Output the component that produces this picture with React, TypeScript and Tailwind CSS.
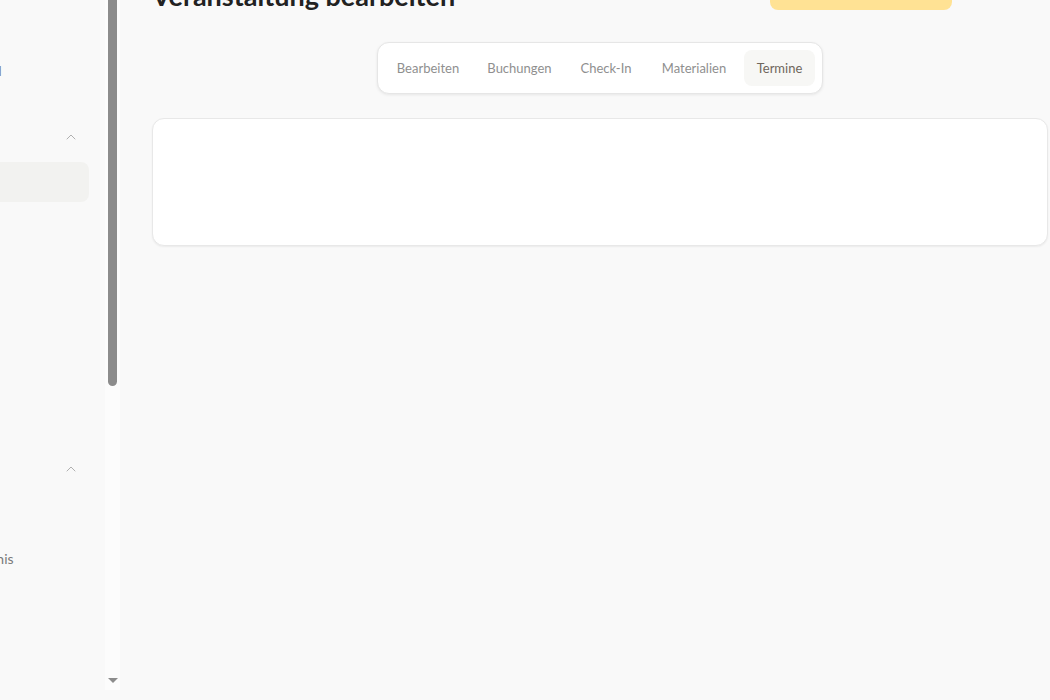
import { ChevronUp, LayoutDashboard, CalendarDays, Users, BookOpen, FileText, Settings, MapPin, Folder, Save } from "lucide-react";

const tabs = [
  { label: "Bearbeiten", w: "w-[86px]" },
  { label: "Buchungen", w: "w-[87px]" },
  { label: "Check-In", w: "w-[76px]" },
  { label: "Materialien", w: "w-[90px]" },
  { label: "Termine", w: "w-[71px]", active: true },
];

const NavItem = ({ icon: Icon, label, active = false }: { icon: any; label: string; active?: boolean }) => (
  <div
    className={`h-10 flex items-center gap-3 px-3 rounded-lg text-[14px] text-[#7a7a7a] ${
      active ? "bg-[#f2f2f0]" : ""
    }`}
  >
    <Icon size={18} strokeWidth={1.5} className="shrink-0" />
    <span className="whitespace-nowrap">{label}</span>
  </div>
);

const SectionHeader = ({ label }: { label: string }) => (
  <div className="h-8 flex items-center justify-between pl-3 pr-[10px] text-[12px] uppercase tracking-wide text-[#a3a3a3]">
    <span>{label}</span>
    <ChevronUp size={16} strokeWidth={1.5} className="text-[#b0b0b0]" />
  </div>
);

const Sidebar = () => (
  <aside className="w-[120px] h-[690px] shrink-0 flex">
    <div className="w-[105px] overflow-hidden">
      <div className="w-[225px] -ml-[120px] px-4 pt-[50px] flex flex-col">
        <div className="h-10 flex items-center gap-3 px-3 text-[14px] text-[#7a7a7a]">
          <LayoutDashboard size={18} strokeWidth={1.5} className="shrink-0" />
          <span className="whitespace-nowrap ml-[-3px]">Dashboard</span>
        </div>
        <div className="mt-[31px]">
          <SectionHeader label="Kurse" />
        </div>
        <div className="mt-[9px] flex flex-col gap-1">
          <NavItem icon={CalendarDays} label="Kurse" active />
          <NavItem icon={MapPin} label="Orte" />
          <NavItem icon={Users} label="Team" />
          <NavItem icon={Folder} label="Ablage" />
          <NavItem icon={BookOpen} label="Kurse" />
          <NavItem icon={FileText} label="Akten" />
        </div>
        <div className="mt-[31px]">
          <SectionHeader label="System" />
        </div>
        <div className="mt-[4px] flex flex-col gap-1">
          <NavItem icon={Settings} label="Setup" />
          <div className="h-10 flex items-center gap-3 px-3 text-[14px] text-[#7a7a7a] mt-[5px]">
            <Users size={18} strokeWidth={1.5} className="shrink-0" />
            <span className="whitespace-nowrap ml-[6px]">Verzeichnis</span>
          </div>
        </div>
      </div>
    </div>
    <div className="w-[15px] bg-[#fcfcfc] flex flex-col items-center">
      <div className="w-[9px] h-[386px] bg-[#8c8c8c] rounded-b-full" />
      <div className="flex-1" />
      <div className="mb-[7px] w-0 h-0 border-l-[5px] border-r-[5px] border-t-[5px] border-l-transparent border-r-transparent border-t-[#8c8c8c]" />
    </div>
  </aside>
);

export default function App() {
  return (
    <div className="h-[700px] w-[1050px] overflow-hidden bg-[#f9f9f9] flex font-['Lato','Noto_Sans',sans-serif]">
      <Sidebar />
      <main className="flex-1 pl-8 flex flex-col">
        <div className="w-[800px] h-9 -mt-[22px] flex items-start justify-between">
          <h1 className="text-[27px] leading-9 font-bold text-[#222222] whitespace-nowrap">
            Veranstaltung bearbeiten
          </h1>
          <button className="w-[182px] h-[34px] -mt-[2px] rounded-lg bg-[#ffe294] text-[14px] text-[#6b5a2a] flex items-start gap-2 pl-4 pt-[3px]">
            <Save size={16} strokeWidth={1.5} className="shrink-0" />
            <span>Speichern</span>
          </button>
        </div>

        <div className="w-[896px] flex justify-center mt-[28px]">
          <div className="flex gap-[5px] p-[7px] bg-white rounded-xl border border-[#e6e6e6] shadow-[0_1px_3px_rgba(0,0,0,0.08)]">
            {tabs.map((t) => (
              <button
                key={t.label}
                className={`${t.w} h-9 pt-[2px] rounded-lg text-[13px] flex items-center justify-center ${
                  t.active ? "bg-[#f7f7f5] text-[#6f665c]" : "text-[#8f8f8f]"
                }`}
              >
                {t.label}
              </button>
            ))}
          </div>
        </div>

        <div className="w-[896px] h-[128px] mt-6 bg-white rounded-xl border border-[#e8e8e8] shadow-[0_1px_2px_rgba(0,0,0,0.06)]" />
      </main>
    </div>
  );
}
